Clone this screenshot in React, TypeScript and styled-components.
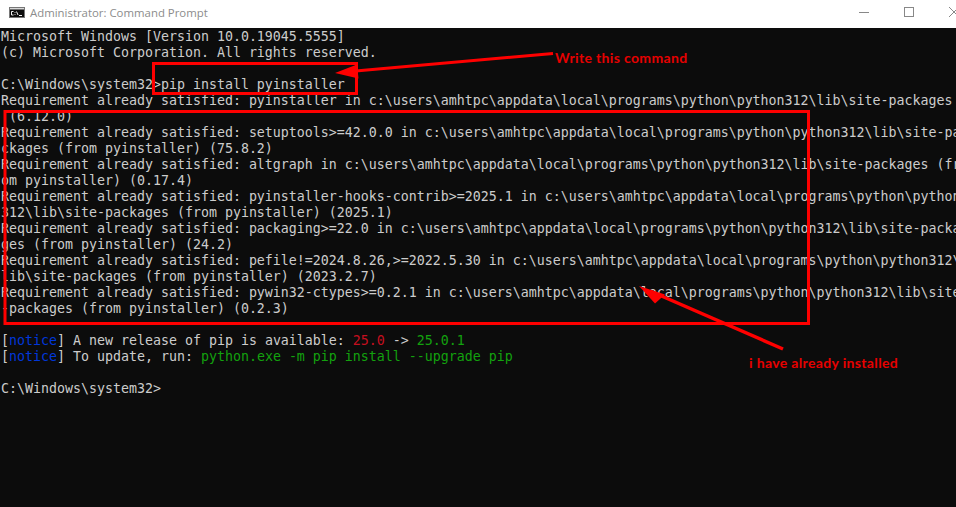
import styled, { createGlobalStyle } from 'styled-components';

const GlobalStyle = createGlobalStyle`
  html, body {
    margin: 0;
    padding: 0;
    width: 956px;
    height: 507px;
    overflow: hidden;
    background: #0c0c0c;
  }
`;

const Window = styled.div`
  position: relative;
  width: 956px;
  height: 507px;
  overflow: hidden;
  background: #0c0c0c;
  display: flex;
  flex-direction: column;
`;

const TitleBar = styled.div`
  height: 28px;
  box-sizing: border-box;
  flex: none;
  background: #fff;
  display: flex;
  align-items: center;
  padding: 0 0 4px 9px;
  gap: 5px;
`;

const Title = styled.span`
  font: 11.4px 'Open Sans', 'Liberation Sans', sans-serif;
  color: #8c8c8c;
  flex: 1;
`;

const WindowButtons = styled.div`
  display: flex;
  align-items: center;
  gap: 1px;
  width: 114px;
  flex: none;
  height: 100%;
`;

const WindowButton = styled.div`
  width: 44px;
  height: 100%;
  flex: none;
  display: flex;
  align-items: center;
  justify-content: center;
`;

const Console = styled.div`
  flex: 1;
  padding: 1px 0 0 1px;
  font: 13.29px/16px 'DejaVu Sans Mono', monospace;
  color: #cccccc;
  white-space: pre;
`;

const Line = styled.div`
  height: 16px;
`;

const Blue = styled.span`
  color: #0037da;
`;
const Red = styled.span`
  color: #c50f1f;
`;
const Green = styled.span`
  color: #13a10e;
`;

const Overlay = styled.svg`
  position: absolute;
  left: 0;
  top: 0;
`;

const Note = styled.span<{ $x: number; $y: number }>`
  position: absolute;
  left: ${p => p.$x}px;
  top: ${p => p.$y}px;
  font: bold 14px/16px 'Lato', 'Liberation Sans', sans-serif;
  letter-spacing: 0.35px;
  color: #e60000;
  white-space: nowrap;
`;

const CmdIcon = () => (
  <svg width="16" height="11" viewBox="0 0 16 11">
    <rect x="0.5" y="0.5" width="15" height="10" fill="#0c0c0c" stroke="#777" />
    <rect x="1" y="1" width="14" height="1.5" fill="#d8d8d8" />
    <path d="M4.500 4.500h-2v3.500h2M6 5v.8M6 7.200V8M7.500 4.500l1.500 3.500M10 8.500h3" stroke="#f4f4f4" strokeWidth="1" fill="none" />
  </svg>
);

const lines = [
  'Microsoft Windows [Version 10.0.19045.5555]',
  '(c) Microsoft Corporation. All rights reserved.',
  '',
  'C:\\Windows\\system32>pip install pyinstaller',
  'Requirement already satisfied: pyinstaller in c:\\users\\amhtpc\\appdata\\local\\programs\\python\\python312\\lib\\site-packages',
  ' (6.12.0)',
  'Requirement already satisfied: setuptools>=42.0.0 in c:\\users\\amhtpc\\appdata\\local\\programs\\python\\python312\\lib\\site-pa',
  'ckages (from pyinstaller) (75.8.2)',
  'Requirement already satisfied: altgraph in c:\\users\\amhtpc\\appdata\\local\\programs\\python\\python312\\lib\\site-packages (fr',
  'om pyinstaller) (0.17.4)',
  'Requirement already satisfied: pyinstaller-hooks-contrib>=2025.1 in c:\\users\\amhtpc\\appdata\\local\\programs\\python\\python',
  '312\\lib\\site-packages (from pyinstaller) (2025.1)',
  'Requirement already satisfied: packaging>=22.0 in c:\\users\\amhtpc\\appdata\\local\\programs\\python\\python312\\lib\\site-packa',
  'ges (from pyinstaller) (24.2)',
  'Requirement already satisfied: pefile!=2024.8.26,>=2022.5.30 in c:\\users\\amhtpc\\appdata\\local\\programs\\python\\python312\\',
  'lib\\site-packages (from pyinstaller) (2023.2.7)',
  'Requirement already satisfied: pywin32-ctypes>=0.2.1 in c:\\users\\amhtpc\\appdata\\local\\programs\\python\\python312\\lib\\site',
  '-packages (from pyinstaller) (0.2.3)',
  '',
];

export default function App() {
  return (
    <Window>
      <GlobalStyle />
      <TitleBar>
        <CmdIcon />
        <Title>Administrator: Command Prompt</Title>
        <WindowButtons>
          <WindowButton>
            <svg width="10" height="10" viewBox="0 0 10 10">
              <path d="M0 5.5h10" stroke="#888" />
            </svg>
          </WindowButton>
          <WindowButton>
            <svg width="10" height="10" viewBox="0 0 10 10">
              <rect x="0.5" y="0.5" width="9" height="9" fill="none" stroke="#888" />
            </svg>
          </WindowButton>
          <WindowButton>
            <svg width="10" height="10" viewBox="0 0 10 10">
              <path d="M0 0l10 10M10 0L0 10" stroke="#888" />
            </svg>
          </WindowButton>
        </WindowButtons>
      </TitleBar>
      <Console>
        {lines.map((text, i) => (
          <Line key={i}>{text}</Line>
        ))}
        <Line>
          [<Blue>notice</Blue>] A new release of pip is available: <Red>25.0</Red> -&gt; <Green>25.0.1</Green>
        </Line>
        <Line>
          [<Blue>notice</Blue>] To update, run: <Green>python.exe -m pip install --upgrade pip</Green>
        </Line>
        <Line />
        <Line>{'C:\\Windows\\system32>'}</Line>
      </Console>
      <Overlay width="956" height="507" viewBox="0 0 956 507" fill="none">
        <rect x="153.5" y="63.5" width="203" height="30" stroke="#f00" strokeWidth="3" />
        <rect x="5" y="111.5" width="803.5" height="212" stroke="#f00" strokeWidth="3" />
        <path d="M553 53.5L350 71.5" stroke="#f00" strokeWidth="3" />
        <path d="M335 73l22-8.500 1.500 14z" fill="#f00" />
        <path d="M783 349L650 291" stroke="#f00" strokeWidth="3.500" />
        <path d="M639 286l26 8.500-10 9z" fill="#f00" />
      </Overlay>
      <Note $x={555} $y={50}>Write this command</Note>
      <Note $x={749} $y={355}>i have already installed</Note>
    </Window>
  );
}
